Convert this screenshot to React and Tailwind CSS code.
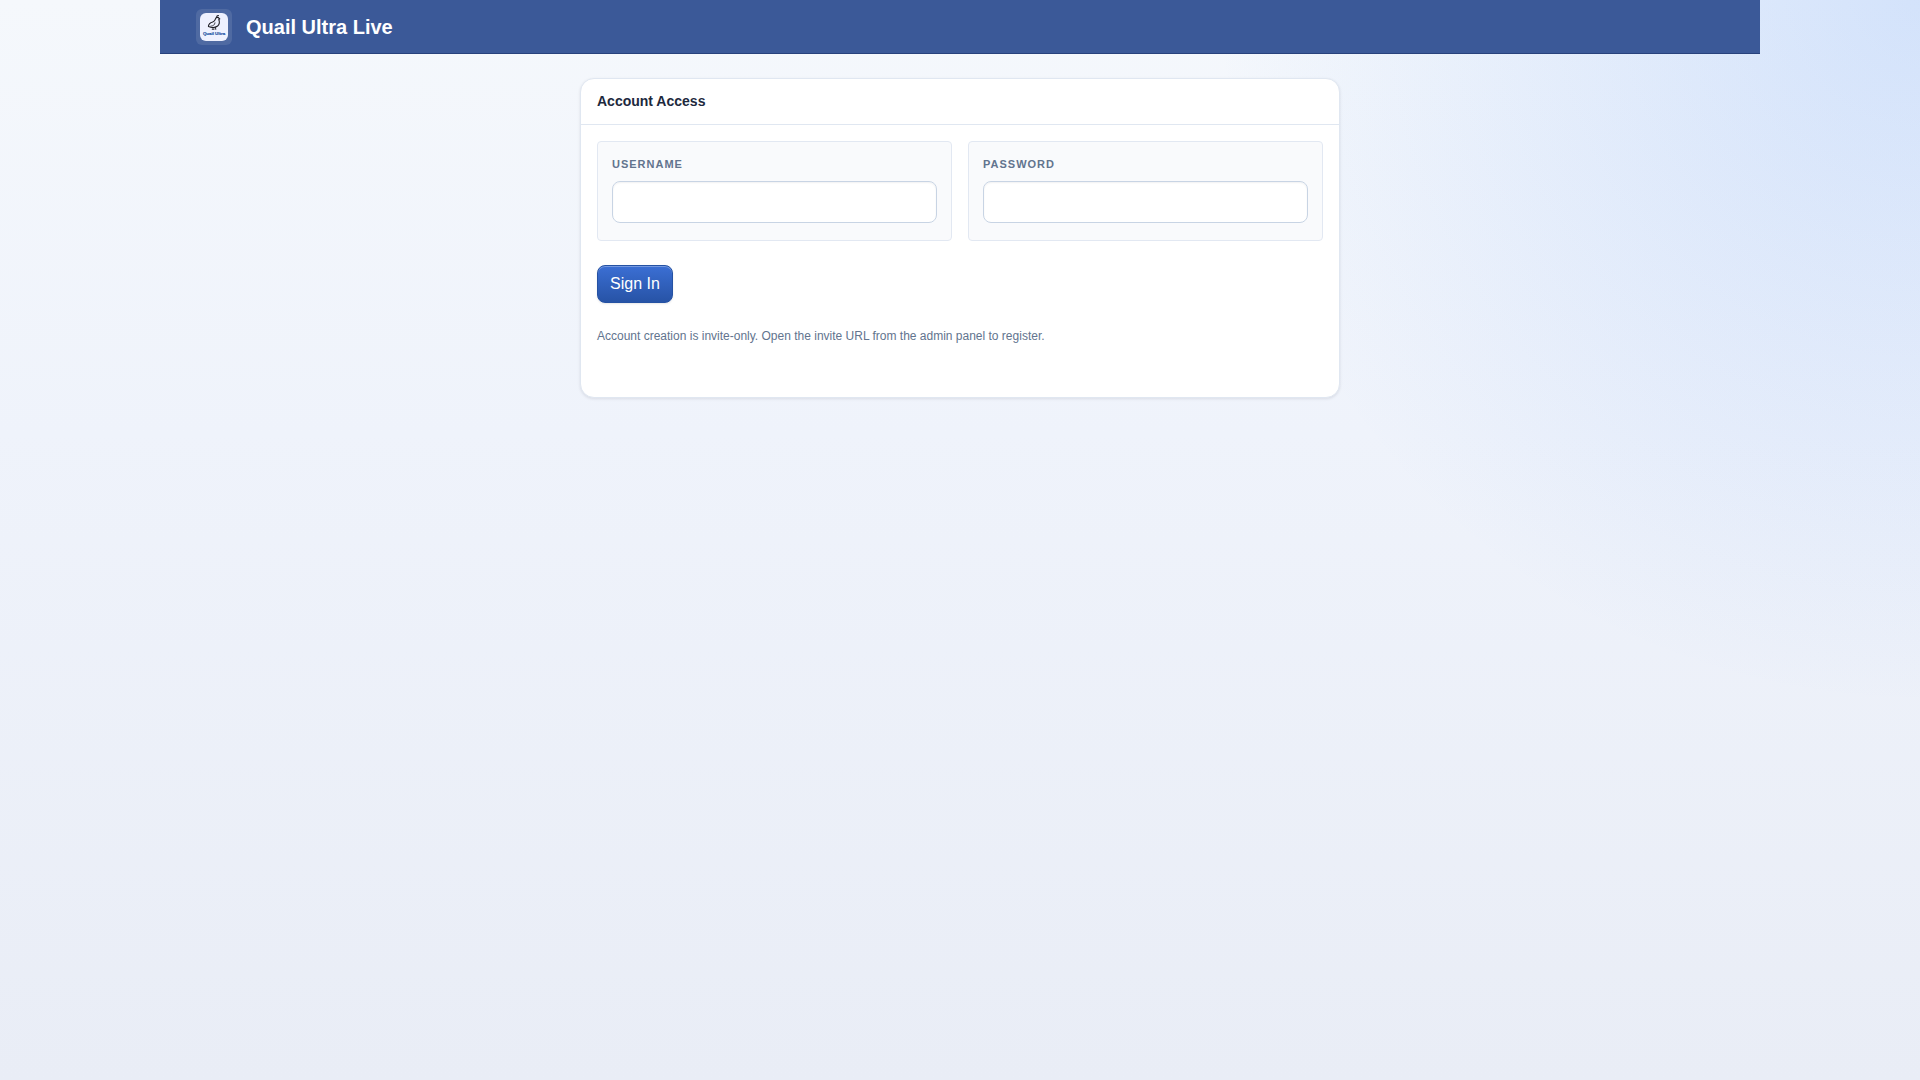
import { useState } from 'react';

function QuailLogo() {
  return (
    <svg viewBox="0 0 28 28" className="h-7 w-7" role="img" aria-label="Quail Ultra">
      <rect width="28" height="28" rx="6" fill="#eef1fe" />
      <g fill="none" stroke="#1c1c22" strokeWidth="1.1" strokeLinecap="round" strokeLinejoin="round">
        <path d="M8.4 13.4C8.6 11 10.4 9.6 12.8 9C15 8.4 15.2 7 15.6 5.6C16 4.2 18.2 3.8 18.9 5.2L19.8 5.9L18.8 6.5C19.8 9 19.4 11.4 17.6 13C16 14.3 13.4 14.8 10.8 14.2L8.4 13.4Z" />
        <path d="M16.8 4.2C16.6 3.2 17.4 2.4 18.4 2.6" />
        <path d="M10.8 13.2C13 13.2 14.8 12 15 9.8" strokeWidth="0.8" />
        <path d="M13 14.6V16.1M15.4 14.2V15.8M12.2 16.3H13.6M14.8 16.1H16" strokeWidth="0.8" />
      </g>
      <text
        x="14"
        y="21.6"
        textAnchor="middle"
        fontSize="4.4"
        fontWeight="700"
        fill="#2456a6"
        stroke="#2456a6"
        strokeWidth="0.2"
        fontFamily="Liberation Sans, Arial, sans-serif"
      >
        Quail Ultra
      </text>
    </svg>
  );
}

function Field({ id, label, type = 'text', value, onChange, autoComplete }) {
  return (
    <div className="rounded border border-[#e2e8f2] bg-[#f9fafc] px-3.5 pt-3.5 pb-[17px]">
      <label
        htmlFor={id}
        className="mb-2 block text-[11px] leading-[17px] font-bold tracking-[1px] text-slate-500 uppercase"
      >
        {label}
      </label>
      <input
        id={id}
        name={id}
        type={type}
        value={value}
        onChange={(e) => onChange(e.target.value)}
        autoComplete={autoComplete}
        className="block h-[42px] w-full rounded-lg border border-[#c8d4e4] bg-white px-3 text-base text-slate-800 shadow-[inset_0_1px_2px_rgba(15,23,42,0.06)] outline-none focus:border-[#3b6fd4]"
      />
    </div>
  );
}

export default function App() {
  const [username, setUsername] = useState('');
  const [password, setPassword] = useState('');

  const handleSubmit = (e) => {
    e.preventDefault();
  };

  return (
    <div className="min-h-screen bg-[radial-gradient(circle_at_top_right,rgba(59,130,246,0.18),transparent_32%),linear-gradient(180deg,#f5f8fc_0%,#eff3fb_40%,#e9edf6_100%)] font-['Liberation_Sans',Arial,sans-serif]">
      <header className="mx-auto flex max-w-[1600px] items-center gap-3.5 border-b border-[#28427c] bg-[#3b5998] px-9 pt-[9px] pb-2">
        <div className="flex h-9 w-9 items-center justify-center rounded-md bg-white/10">
          <QuailLogo />
        </div>
        <h1 className="text-xl font-bold text-white">Quail Ultra Live</h1>
      </header>

      <main className="px-4 py-6">
        <section className="mx-auto max-w-[760px] overflow-hidden rounded-[14px] border border-[#e0e7f1] bg-white shadow-[0_1px_3px_rgba(15,23,42,0.1)]">
          <div className="border-b border-[#e0e7f1] px-4 py-3">
            <h2 className="text-sm leading-[21px] font-bold text-slate-800">Account Access</h2>
          </div>

          <div className="px-4 pt-4 pb-[52px]">
            <form onSubmit={handleSubmit}>
              <div className="grid grid-cols-1 gap-4 sm:grid-cols-2">
                <Field
                  id="username"
                  label="Username"
                  value={username}
                  onChange={setUsername}
                  autoComplete="username"
                />
                <Field
                  id="password"
                  label="Password"
                  type="password"
                  value={password}
                  onChange={setPassword}
                  autoComplete="current-password"
                />
              </div>

              <button
                type="submit"
                className="mt-6 h-[38px] rounded-lg border border-[#2552a3] bg-linear-to-b from-[#3b6fd4] to-[#2753a6] px-3 text-base text-white shadow-[inset_0_1px_0_rgba(255,255,255,0.3),0_1px_2px_rgba(15,23,42,0.1)]"
              >
                Sign In
              </button>
            </form>

            <p className="mt-6 text-xs leading-[18px] text-slate-500">
              Account creation is invite-only. Open the invite URL from the admin panel to register.
            </p>
          </div>
        </section>
      </main>
    </div>
  );
}
